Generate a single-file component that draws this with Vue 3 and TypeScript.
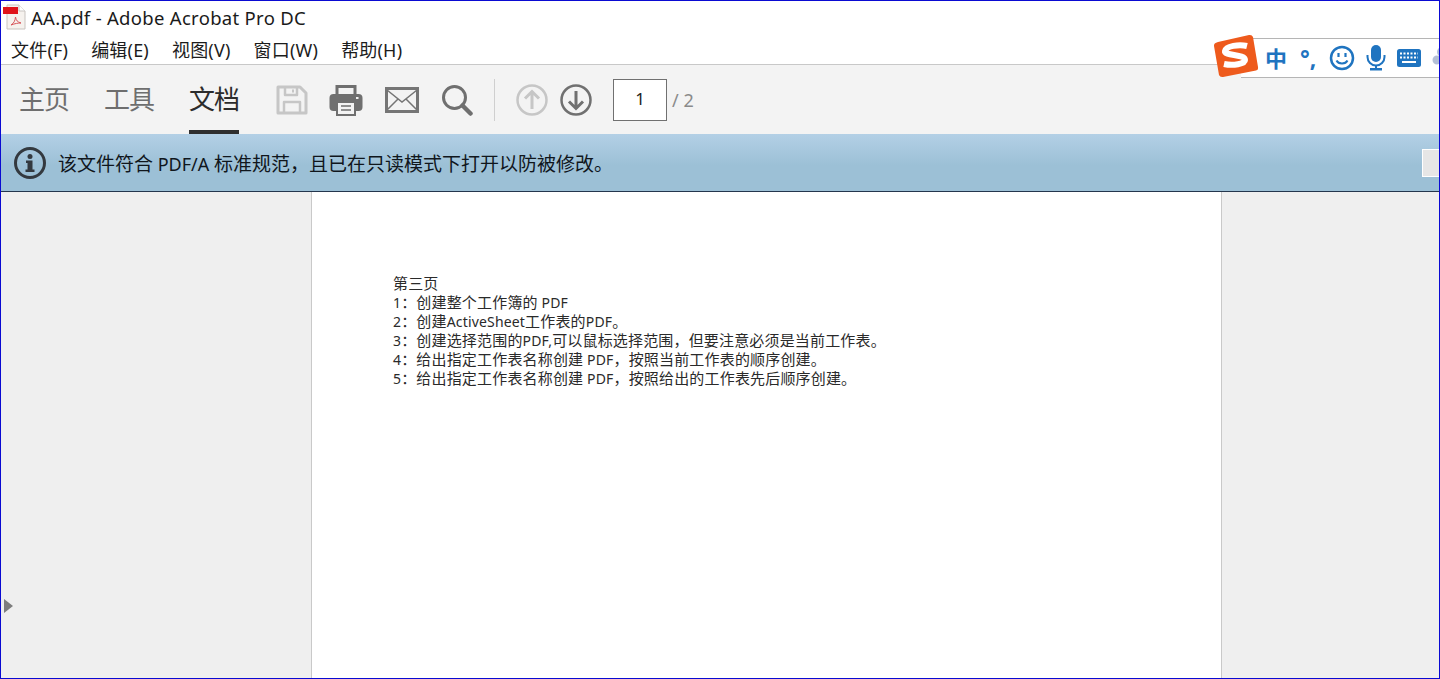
<script setup lang="ts">
const menus = ['文件(F)', '编辑(E)', '视图(V)', '窗口(W)', '帮助(H)']
const tabs = [
  { label: '主页', active: false },
  { label: '工具', active: false },
  { label: '文档', active: true },
]
const lines = [
  '第三页',
  '1：创建整个工作簿的 PDF',
  '2：创建ActiveSheet工作表的PDF。',
  '3：创建选择范围的PDF,可以鼠标选择范围，但要注意必须是当前工作表。',
  '4：给出指定工作表名称创建 PDF，按照当前工作表的顺序创建。',
  '5：给出指定工作表名称创建 PDF，按照给出的工作表先后顺序创建。',
]
const notice = '该文件符合 PDF/A 标准规范，且已在只读模式下打开以防被修改。'

// Latin and CJK runs are sized apart, the original uses two fonts
function runs(text: string): { text: string; cjk: boolean }[] {
  const parts = text.match(/[\u3000-\u9fff\uff00-\uffef]+|[^\u3000-\u9fff\uff00-\uffef]+/g) ?? []
  return parts.map((p) => ({ text: p, cjk: /[\u3000-\u9fff\uff00-\uffef]/.test(p) }))
}
</script>

<template>
  <div class="window">
    <header class="title-bar">
      <svg class="pdf-icon" width="24" height="26" viewBox="0 0 24 26">
        <path d="M4 1h12l6 6v18H4z" fill="#f6f2ee" stroke="#c9c4c0" />
        <path d="M16 1v6h6" fill="#fff" stroke="#c9c4c0" />
        <rect x="0" y="3" width="15" height="7" fill="#e0131a" />
        <path d="M8 21c3-2 4-4 4.500-8 .5 3.500 2 5 5.500 6-3 0-6 .5-10 2z" fill="none" stroke="#d8555a" stroke-width="1" />
      </svg>
      <span class="title-text">AA.pdf - Adobe Acrobat Pro DC</span>
    </header>

    <nav class="menu-bar">
      <span v-for="m in menus" :key="m" class="menu-item">{{ m }}</span>
    </nav>

    <section class="toolbar">
      <div class="tabs">
        <div v-for="t in tabs" :key="t.label" class="tab" :class="{ active: t.active }">{{ t.label }}</div>
      </div>

      <div class="tools">
        <svg width="32" height="32" viewBox="0 0 32 32" fill="none" stroke="#c6c6c6" stroke-width="3" stroke-linejoin="round">
          <path d="M2 3h22l6 6v20H2z" />
          <path d="M9 3v8h12V3M8 29V18h16v11" stroke-width="2.500" />
          <path d="M17 5.500v3" stroke-width="2" />
        </svg>
        <svg class="print-icon" width="34" height="32" viewBox="0 0 34 32">
          <path d="M8 11V2.500h18V11" fill="none" stroke="#6f6f6f" stroke-width="3" />
          <rect x="0.500" y="10" width="33" height="17" rx="4" fill="#6f6f6f" />
          <rect x="8" y="18" width="18" height="13" fill="#f3f3f3" stroke="#6f6f6f" stroke-width="2" />
          <path d="M12 22h10M12 26h10" stroke="#6f6f6f" stroke-width="1.500" />
          <rect x="27" y="13" width="2.500" height="2" fill="#f3f3f3" />
        </svg>
        <svg width="34" height="26" viewBox="0 0 34 26" fill="none" stroke="#757575">
          <rect x="1.500" y="1.500" width="31" height="23" stroke-width="3" />
          <path d="M2 3l15 12L32 3M2 23l11-11M32 23L21 12" stroke-width="1.500" />
        </svg>
        <svg width="32" height="32" viewBox="0 0 32 32" fill="none" stroke="#6f6f6f">
          <circle cx="13.500" cy="13.500" r="11" stroke-width="3" />
          <path d="M21.500 21.500l8 8" stroke-width="4.500" stroke-linecap="round" />
        </svg>
      </div>

      <div class="divider"></div>

      <div class="pager">
        <svg width="32" height="32" viewBox="0 0 32 32" fill="none" stroke="#c6c6c6">
          <circle cx="16" cy="16" r="14.500" stroke-width="2.500" />
          <path d="M16 25V8M9 14.500 16 7.500l7 7" stroke-width="3" />
        </svg>
        <svg width="32" height="32" viewBox="0 0 32 32" fill="none" stroke="#707070">
          <circle cx="16" cy="16" r="14.500" stroke-width="2.500" />
          <path d="M16 7v17M9 17.500l7 7 7-7" stroke-width="3" />
        </svg>
      </div>

      <div class="page-box">1</div>
      <span class="page-total">/ 2</span>
    </section>

    <section class="banner">
      <svg class="info-icon" width="32" height="32" viewBox="0 0 32 32">
        <circle cx="16" cy="16" r="14.500" fill="none" stroke="#33393f" stroke-width="3" />
        <circle cx="16" cy="9.500" r="2.500" fill="#33393f" />
        <path d="M12 13.500h6.500v9h2v2.500h-9v-2.500h2v-6.500H12z" fill="#33393f" />
      </svg>
      <span class="banner-text">
        <span v-for="(r, i) in runs(notice)" :key="i" :class="{ latin: !r.cjk }">{{ r.text }}</span>
      </span>
      <div class="banner-btn"></div>
    </section>

    <main class="viewer">
      <aside class="side">
        <span class="side-arrow"></span>
      </aside>
      <div class="page">
        <p v-for="l in lines" :key="l" class="page-line">
          <span v-for="(r, i) in runs(l)" :key="i" :class="{ latin: !r.cjk }">{{ r.text }}</span>
        </p>
      </div>
      <div class="gutter"></div>
    </main>

    <!-- input method bar floats above the app -->
    <div class="ime">
      <svg class="ime-logo" width="46" height="44" viewBox="0 0 46 44">
        <path d="M5 8 36 1q3-.5 4 2l5 30q.5 3-2 3.500L10 43q-3 .5-4-2L1 12q-.5-3 4-4z" fill="#ee5a1c" />
        <path d="M34 12C26 10 13 12 12 17c-1 5 20 3 20 9 0 4-12 6-21 4" fill="none" stroke="#fff" stroke-width="6" />
      </svg>
      <span class="ime-zh">中</span>
      <span class="ime-punct">°,</span>
      <svg class="ime-smile" width="26" height="26" viewBox="0 0 26 26" fill="none" stroke="#1f74c0">
        <circle cx="13" cy="13" r="11" stroke-width="2.500" />
        <path d="M9.500 8v4M16.500 8v4" stroke-width="2.200" />
        <path d="M7.500 15.500c2 4 9 4 11 0" stroke-width="2" />
      </svg>
      <svg width="20" height="26" viewBox="0 0 20 26" fill="#1f74c0">
        <rect x="5" y="0" width="10" height="17" rx="5" />
        <path d="M1.500 10v2a8.500 8.500 0 0 0 17 0v-2" fill="none" stroke="#1f74c0" stroke-width="2" />
        <rect x="9" y="20" width="2" height="4" />
        <rect x="4" y="23" width="12" height="2.500" />
      </svg>
      <svg width="24" height="18" viewBox="0 0 24 18">
        <rect width="24" height="18" rx="2.500" fill="#1f74c0" />
        <path d="M3 4.500h18M3 8.500h18" stroke="#fff" stroke-width="2" stroke-dasharray="2 1.500" />
        <path d="M5 13h14" stroke="#fff" stroke-width="2" />
      </svg>
      <svg width="14" height="24" viewBox="0 0 14 24" fill="#b3bfd6">
        <circle cx="10" cy="6" r="5" />
        <circle cx="5" cy="14" r="4.500" />
        <circle cx="13" cy="16" r="4.500" />
      </svg>
    </div>
  </div>
</template>

<style scoped>
.window {
  position: relative;
  width: 1440px;
  height: 679px;
  box-sizing: border-box;
  border: 1px solid #0a0ad2;
  display: flex;
  flex-direction: column;
  overflow: hidden;
  background: #fff;
  font-family: "Noto Sans", "Noto Sans CJK SC", sans-serif;
}

.title-bar {
  height: 32px;
  display: flex;
  align-items: center;
  flex-shrink: 0;
  padding-left: 2px;
  gap: 4px;
}

.pdf-icon {
  flex-shrink: 0;
}

.title-text {
  font-size: 18.500px;
  color: #1a1a1a;
  letter-spacing: 0.300px;
}

.menu-bar {
  height: 31px;
  display: flex;
  align-items: center;
  gap: 23px;
  padding-left: 10px;
  flex-shrink: 0;
  border-bottom: 1px solid #c8c8c8;
}

.menu-item {
  font-size: 18px;
  letter-spacing: 0.200px;
  color: #1c1c1c;
}

.toolbar {
  height: 69px;
  background: #f3f3f3;
  display: flex;
  align-items: center;
  flex-shrink: 0;
  padding-left: 18px;
}

.tabs {
  display: flex;
  gap: 35px;
  align-self: stretch;
}

.tab {
  width: 50px;
  font-size: 26px;
  letter-spacing: -1px;
  line-height: 69px;
  color: #6e6e6e;
  box-sizing: border-box;
  height: 69px;
  border-bottom: 4px solid transparent;
}

.tab.active {
  color: #2c2c2c;
  border-bottom-color: #2f2f2f;
}

.tools {
  display: flex;
  align-items: center;
  gap: 22px;
  margin-left: 37px;
}

.print-icon {
  margin-left: -1px;
}

.divider {
  width: 1px;
  height: 42px;
  background: #cfcfcf;
  margin-left: 21px;
}

.pager {
  display: flex;
  align-items: center;
  gap: 12px;
  margin-left: 21px;
}

.page-box {
  width: 54px;
  height: 42px;
  box-sizing: border-box;
  margin-left: 21px;
  border: 1px solid #707070;
  background: #fff;
  font-size: 17px;
  line-height: 38px;
  text-align: center;
  color: #222;
}

.page-total {
  margin-left: 5px;
  font-size: 18px;
  color: #8a8a8a;
}

.banner {
  position: relative;
  height: 58px;
  flex-shrink: 0;
  box-sizing: border-box;
  background: linear-gradient(#b3d0e6, #9cc0d6 55%);
  border-bottom: 1px solid #24364d;
  display: flex;
  align-items: center;
  padding-left: 13px;
  gap: 12px;
}

.banner-text {
  font-size: 19px;
  color: #10161c;
  white-space: pre;
}

.banner-text .latin {
  font-size: 18px;
}

.banner-btn {
  position: absolute;
  left: 1421px;
  top: 15px;
  width: 30px;
  height: 28px;
  box-sizing: border-box;
  background: #e6e6e6;
  border: 1px solid #fff;
}

.viewer {
  flex: 1;
  display: flex;
  min-height: 0;
}

.side {
  position: relative;
  width: 310px;
  background: #efefef;
  border-right: 1px solid #c9c9c9;
  flex-shrink: 0;
}

.side-arrow {
  position: absolute;
  left: 3px;
  top: 407px;
  border-left: 9px solid #7d7d7d;
  border-top: 7px solid transparent;
  border-bottom: 7px solid transparent;
}

.page {
  width: 909px;
  background: #fff;
  flex-shrink: 0;
  box-sizing: border-box;
  padding: 82px 0 0 81px;
}

.page-line {
  margin: 0;
  font-size: 15px;
  letter-spacing: 0.170px;
  line-height: 19px;
  height: 19px;
  color: #2a2a2a;
  white-space: pre;
}

.page-line .latin {
  font-size: 14px;
}

.gutter {
  flex: 1;
  background: #efefef;
  border-left: 1px solid #c9c9c9;
}

.ime {
  position: absolute;
  left: 1240px;
  top: 37px;
  width: 210px;
  height: 40px;
  box-sizing: border-box;
  background: #fff;
  border-top: 1px solid #b5b5b5;
  border-bottom: 1px solid #b5b5b5;
  display: flex;
  align-items: center;
  gap: 11px;
  padding-left: 24px;
}

.ime svg {
  flex-shrink: 0;
}

.ime-logo {
  position: absolute;
  left: -28px;
  top: -5px;
}

.ime-zh {
  width: 22px;
  flex-shrink: 0;
  font-size: 22px;
  font-weight: 700;
  color: #1f74c0;
  line-height: 1;
}

.ime-punct {
  width: 20px;
  flex-shrink: 0;
  margin-left: 2px;
  font-size: 23px;
  font-weight: 700;
  color: #1f74c0;
  line-height: 1;
}

.ime-smile {
  margin-left: -2px;
}
</style>

<style>
html,
body {
  margin: 0;
  overflow: hidden;
}
</style>
